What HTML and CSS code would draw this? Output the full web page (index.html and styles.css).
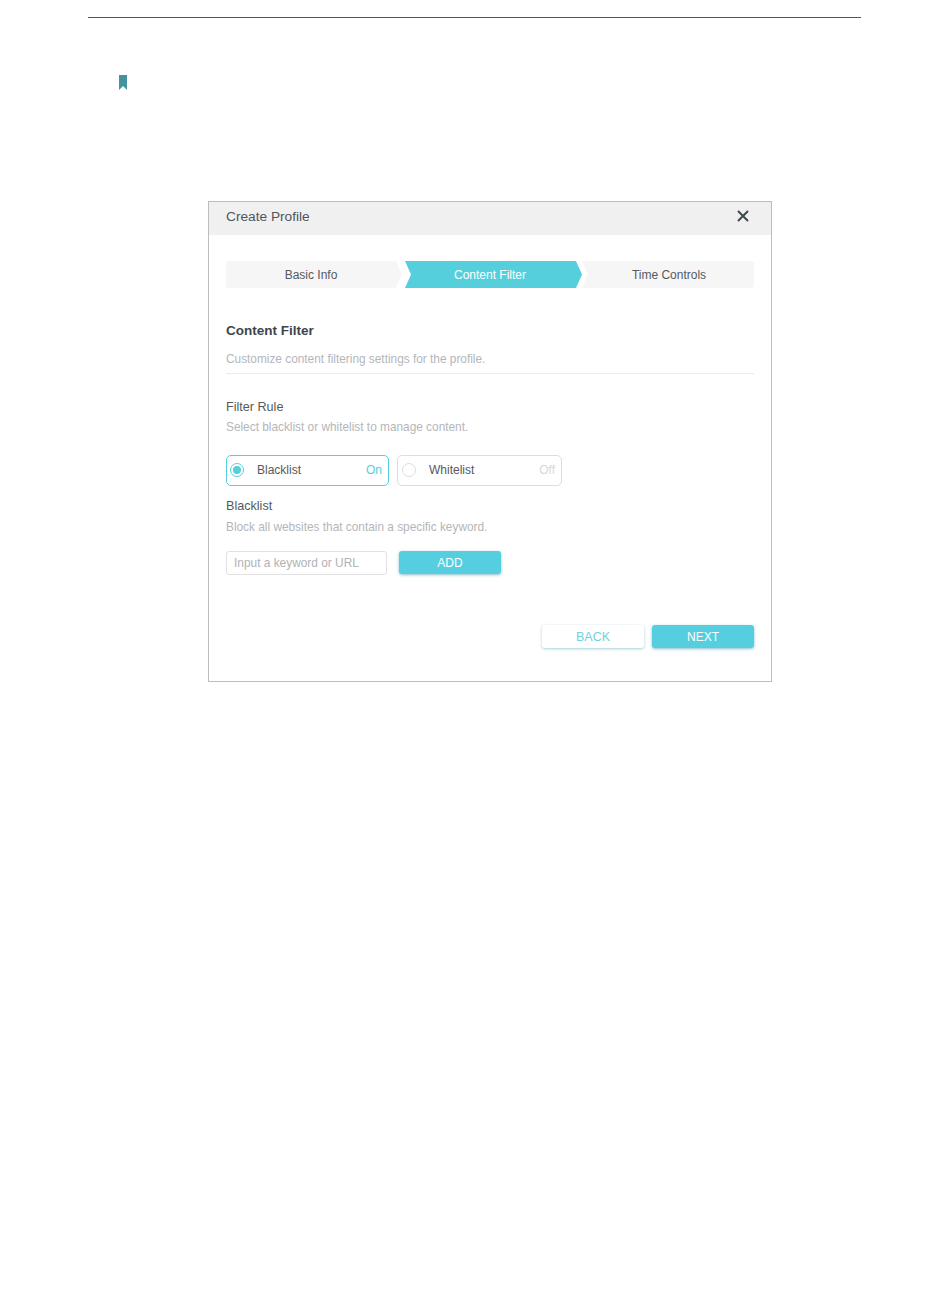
FILE: index.html
```html
<!DOCTYPE html>
<html lang="en">
<head>
<meta charset="UTF-8">
<meta name="viewport" content="width=device-width, initial-scale=1.0">
<title>Create Profile</title>
<link rel="stylesheet" href="styles.css">
</head>
<body>
<div class="page">
  <div class="top-rule"></div>
  <svg class="bookmark" width="8" height="15" viewBox="0 0 8 15"><path d="M0 0H8V15L4 11L0 15Z"/></svg>

  <div class="dialog">
    <div class="dialog-head">
      <span class="dialog-title">Create Profile</span>
      <svg class="close" width="12" height="12" viewBox="0 0 12 12"><path d="M1 1L11 11M11 1L1 11"/></svg>
    </div>
    <div class="dialog-body">
      <div class="steps">
        <div class="step step-first">Basic Info</div>
        <div class="step step-active">Content Filter</div>
        <div class="step step-last">Time Controls</div>
      </div>

      <h2 class="section-title">Content Filter</h2>
      <p class="section-desc">Customize content filtering settings for the profile.</p>

      <h3 class="label">Filter Rule</h3>
      <p class="hint">Select blacklist or whitelist to manage content.</p>
      <div class="rules">
        <div class="rule rule-on">
          <span class="radio"></span>
          <span class="rule-name">Blacklist</span>
          <span class="rule-state">On</span>
        </div>
        <div class="rule rule-off">
          <span class="radio"></span>
          <span class="rule-name">Whitelist</span>
          <span class="rule-state">Off</span>
        </div>
      </div>

      <h3 class="label label-list">Blacklist</h3>
      <p class="hint hint-list">Block all websites that contain a specific keyword.</p>
      <div class="add-row">
        <input class="keyword" type="text" placeholder="Input a keyword or URL">
        <button class="btn btn-fill btn-add">ADD</button>
      </div>

      <div class="actions">
        <button class="btn btn-plain">BACK</button>
        <button class="btn btn-fill">NEXT</button>
      </div>
    </div>
  </div>
</div>
</body>
</html>
```
FILE: styles.css
```css
* {
  box-sizing: border-box;
}

body {
  font-family: 'Liberation Sans', Arial, sans-serif;
  background: #fff;
  margin: 0;
  color: #4a4f55;
}

.page {
  height: 1297px;
  padding: 17px 89px 0 88px;
}

.top-rule {
  height: 1px;
  background: #555;
}

.bookmark {
  display: block;
  margin: 57px 0 0 31px;
  fill: #45929f;
}

/* dialog */
.dialog {
  width: 564px;
  height: 481px;
  margin: 111px 0 0 120px;
  border: 1px solid #bdbdbd;
}

.dialog-head {
  display: flex;
  justify-content: space-between;
  align-items: center;
  height: 33px;
  padding: 0 22px 4px 17px;
  background: #f0f0f0;
}

.dialog-title {
  font-size: 13.7px;
  color: #50555a;
}

.close {
  margin-bottom: 2px;
  stroke: #3e4a50;
  stroke-width: 2;
  fill: none;
}

.dialog-body {
  padding: 26px 17px 0;
}

/* steps */
.steps {
  display: flex;
  height: 27px;
}

.step {
  display: flex;
  justify-content: center;
  align-items: center;
  font-size: 12px;
  color: #55595e;
  background: #f6f6f6;
}

.step-first {
  width: 176px;
  padding-right: 6px;
  border-radius: 3px 0 0 3px;
  clip-path: polygon(0 0, 170px 0, 176px 50%, 170px 100%, 0 100%);
}

.step-active {
  width: 177px;
  margin-left: 3px;
  padding-right: 7px;
  color: #fff;
  background: #55cfdc;
  clip-path: polygon(0 0, 171px 0, 177px 50%, 171px 100%, 0 100%, 6px 50%);
}

.step-last {
  width: 172px;
  padding-left: 2px;
  border-radius: 0 3px 3px 0;
  clip-path: polygon(0 0, 100% 0, 100% 100%, 0 100%, 6px 50%);
}

/* section text */
.section-title {
  margin: 35px 0 0;
  font-size: 13.5px;
  line-height: 15px;
  color: #3f454b;
}

.section-desc {
  margin: 14px 0 0;
  padding-bottom: 7px;
  font-size: 11.85px;
  line-height: 14px;
  color: #b4b6ba;
  border-bottom: 1px solid #ececec;
}

.label {
  margin: 26px 0 0;
  font-size: 12.6px;
  font-weight: normal;
  line-height: 14px;
  color: #55595e;
}

.label-list {
  margin-top: 13px;
}

.hint {
  margin: 6px 0 0;
  font-size: 11.85px;
  line-height: 14px;
  color: #b4b6ba;
}

.hint-list {
  margin-top: 7px;
}

/* filter rule */
.rules {
  display: flex;
  gap: 8px;
  margin-top: 21px;
}

.rule {
  display: flex;
  align-items: center;
  height: 31px;
  padding: 0 6px 0 4px;
  border: 1px solid #ddd;
  border-radius: 5px;
}

.rule-on {
  width: 163px;
  padding-left: 3px;
  border-color: #55cfdc;
}

.rule-off {
  width: 165px;
}

.radio {
  display: flex;
  justify-content: center;
  align-items: center;
  width: 14px;
  height: 14px;
  margin-bottom: 1px;
  border: 1px solid #ddd;
  border-radius: 50%;
}

.rule-on .radio {
  border-color: #55cfdc;
}

.rule-on .radio::after {
  content: "";
  width: 8px;
  height: 8px;
  border-radius: 50%;
  background: #55cfdc;
}

.rule-name {
  flex: 1;
  margin: 0 0 1px 13px;
  font-size: 12px;
  color: #55595e;
}

.rule-state {
  margin-bottom: 1px;
  font-size: 12px;
  color: #55cfdc;
}

.rule-off .rule-state {
  color: #d8d8d8;
}

/* add keyword */
.add-row {
  display: flex;
  gap: 12px;
  margin-top: 17px;
}

.keyword {
  width: 161px;
  height: 24px;
  padding: 0 8px 0 7px;
  border: 1px solid #e2e2e2;
  border-radius: 3px;
  font-family: inherit;
  font-size: 11.9px;
  outline: none;
}

.keyword::placeholder {
  color: #b0b2b6;
  opacity: 1;
}

.btn {
  width: 102px;
  height: 23px;
  padding: 0;
  border: 0;
  border-radius: 3px;
  font-family: inherit;
  font-size: 12px;
}

.btn-fill {
  color: #fff;
  background: #55cfdf;
  box-shadow: 0 1px 3px rgba(60, 150, 170, 0.6);
}

.btn-plain {
  color: #6dd3df;
  background: #fff;
  font-size: 12.5px;
  box-shadow: 0 1px 3px rgba(60, 150, 170, 0.45);
}

.actions {
  display: flex;
  justify-content: flex-end;
  gap: 8px;
  margin-top: 50px;
}
```
